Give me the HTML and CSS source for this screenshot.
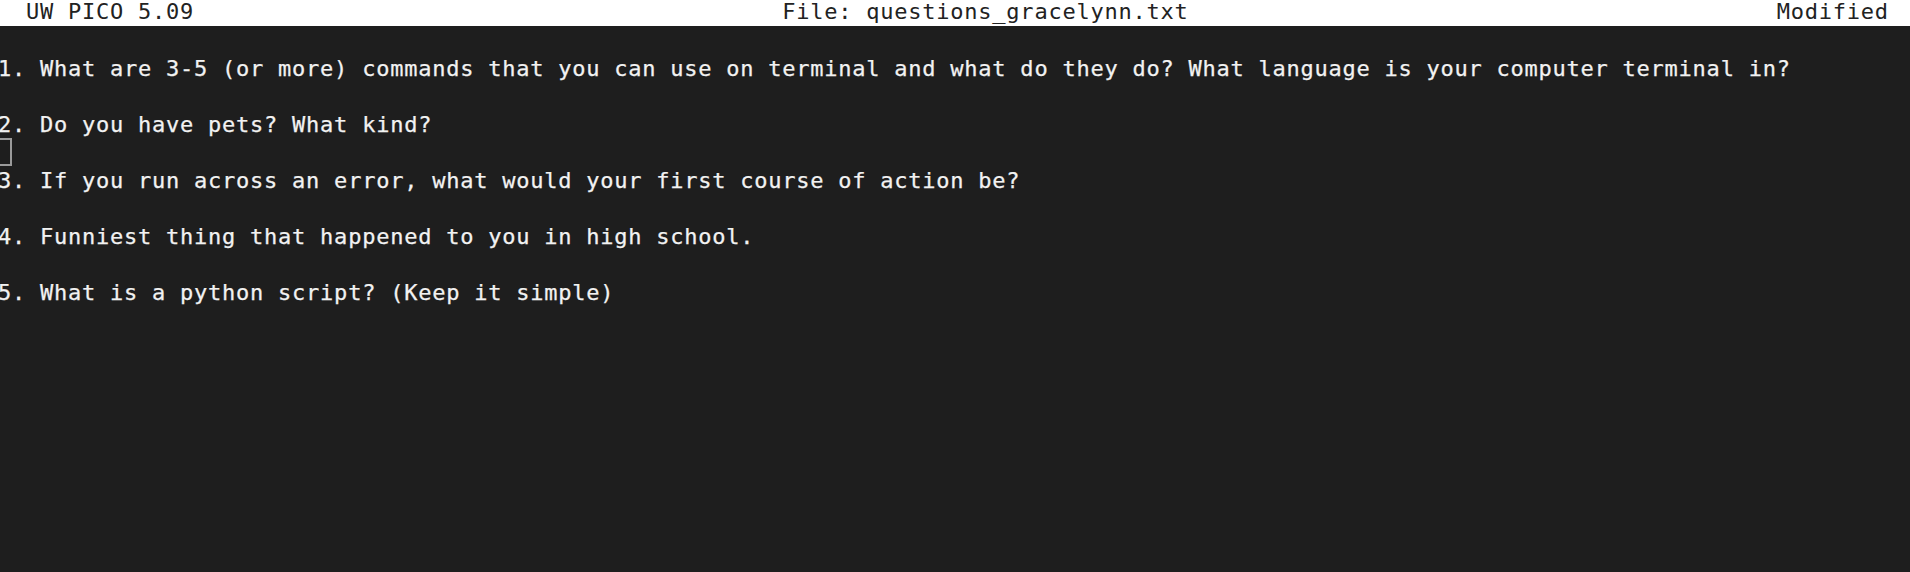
FILE: index.html
```html
<!DOCTYPE html>
<html>
<head>
<meta charset="utf-8">
<link rel="stylesheet" href="styles.css">
</head>
<body>
<div class="term">
<div class="row head">  UW PICO 5.09                                          File: questions_gracelynn.txt                                          Modified </div>
<div class="row"></div>
<div class="row line">1. What are 3-5 (or more) commands that you can use on terminal and what do they do? What language is your computer terminal in?</div>
<div class="row"></div>
<div class="row line">2. Do you have pets? What kind?</div>
<div class="row"><span class="cursor"></span></div>
<div class="row line">3. If you run across an error, what would your first course of action be?</div>
<div class="row"></div>
<div class="row line">4. Funniest thing that happened to you in high school.</div>
<div class="row"></div>
<div class="row line">5. What is a python script? (Keep it simple)</div>
</div>
</body>
</html>
```
FILE: styles.css
```css
html, body {
  margin: 0;
  padding: 0;
  background: #1e1e1e;
  height: 100%;
  overflow: hidden;
}
.term {
  margin-top: -2px;
  margin-left: -2px;
  font-family: "DejaVu Sans Mono", "Liberation Mono", monospace;
  font-size: 22px;
  letter-spacing: 0.76px;
  line-height: 28px;
  color: #f2f2f2;
}
.row {
  height: 28px;
  box-sizing: border-box;
  white-space: pre;
}
.line {
  padding-top: 1px;
  -webkit-text-stroke: 0.25px #f2f2f2;
}
.head {
  background: #ffffff;
  color: #222222;
  margin-left: 2px;
  text-indent: -2px;
}
.cursor {
  display: inline-block;
  width: 14px;
  height: 28px;
  box-sizing: border-box;
  border: 2px solid #9a9a9a;
  vertical-align: top;
}
```
